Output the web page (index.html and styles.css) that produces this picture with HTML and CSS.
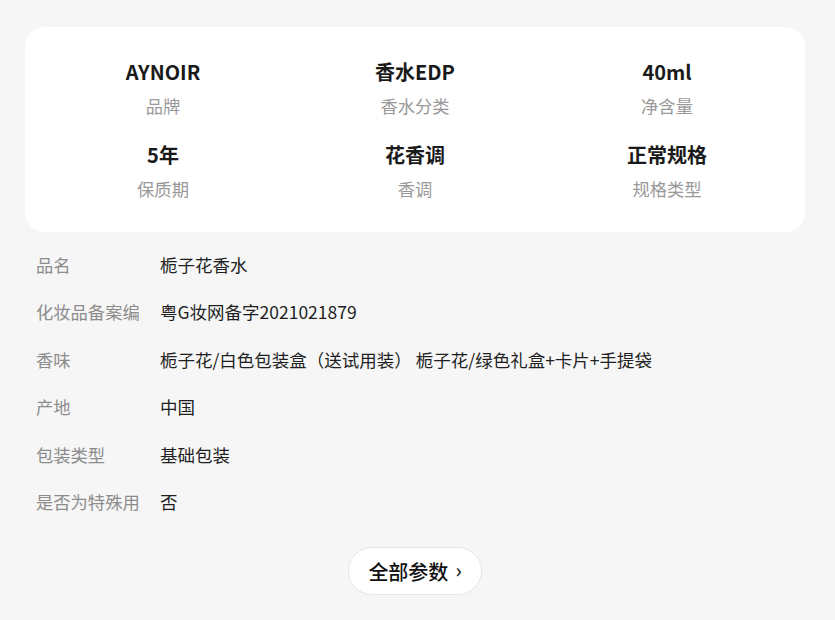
FILE: index.html
```html
<!DOCTYPE html>
<html lang="zh">
<head>
<meta charset="utf-8">
<link rel="stylesheet" href="styles.css">
</head>
<body>
<div class="page">
  <section class="card">
    <div class="cell"><div class="val">AYNOIR</div><div class="lab">品牌</div></div>
    <div class="cell"><div class="val">香水EDP</div><div class="lab">香水分类</div></div>
    <div class="cell"><div class="val">40ml</div><div class="lab">净含量</div></div>
    <div class="cell"><div class="val">5年</div><div class="lab">保质期</div></div>
    <div class="cell"><div class="val">花香调</div><div class="lab">香调</div></div>
    <div class="cell"><div class="val">正常规格</div><div class="lab">规格类型</div></div>
  </section>
  <section class="details">
    <div class="row"><span class="k">品名</span><span class="v">栀子花香水</span></div>
    <div class="row"><span class="k">化妆品备案编</span><span class="v">粤G妆网备字2021021879</span></div>
    <div class="row"><span class="k">香味</span><span class="v">栀子花/白色包装盒（送试用装） 栀子花/绿色礼盒+卡片+手提袋</span></div>
    <div class="row"><span class="k">产地</span><span class="v">中国</span></div>
    <div class="row"><span class="k">包装类型</span><span class="v">基础包装</span></div>
    <div class="row"><span class="k">是否为特殊用</span><span class="v">否</span></div>
  </section>
  <div class="more-wrap">
    <button class="more">全部参数<span class="chev">›</span></button>
  </div>
</div>
</body>
</html>
```

FILE: styles.css
```css
* { box-sizing: border-box; }
html, body {
  margin: 0;
  background: #f6f6f6;
  font-family: "Noto Sans CJK SC", "Noto Sans", sans-serif;
}
.page {
  padding: 27px 30px 0 25px;
}
.card {
  background: #fff;
  border-radius: 20px;
  padding: 31px 12px;
  display: grid;
  grid-template-columns: repeat(3, 1fr);
  row-gap: 23px;
}
.cell {
  display: flex;
  flex-direction: column;
  align-items: center;
  gap: 8px;
}
.val {
  font-size: 20px;
  font-weight: 700;
  line-height: 28px;
  color: #1a1a1a;
}
.lab {
  font-size: 17.3px;
  line-height: 24px;
  color: #999;
}
.details {
  margin-top: 9px;
  padding-left: 11px;
}
.row {
  display: flex;
  font-size: 17.3px;
  line-height: 47.4px;
  height: 47.4px;
}
.k {
  width: 124px;
  flex: none;
  color: #8c8c8c;
  white-space: nowrap;
  overflow: hidden;
}
.v {
  color: #1f1f1f;
  white-space: nowrap;
  font-size: 17.5px;
}
.more-wrap {
  display: flex;
  justify-content: center;
  margin-top: 22px;
}
.more {
  font-family: inherit;
  font-size: 20px;
  color: #111;
  background: #fff;
  border: 1px solid #e6e6e6;
  border-radius: 24px;
  height: 48px;
  width: 134px;
  padding: 0;
  display: flex;
  align-items: center;
  justify-content: center;
  gap: 7px;
  font-weight: 500;
}
.chev {
  font-size: 20px;
  line-height: 1;
  position: relative;
  top: -1px;
}
```
